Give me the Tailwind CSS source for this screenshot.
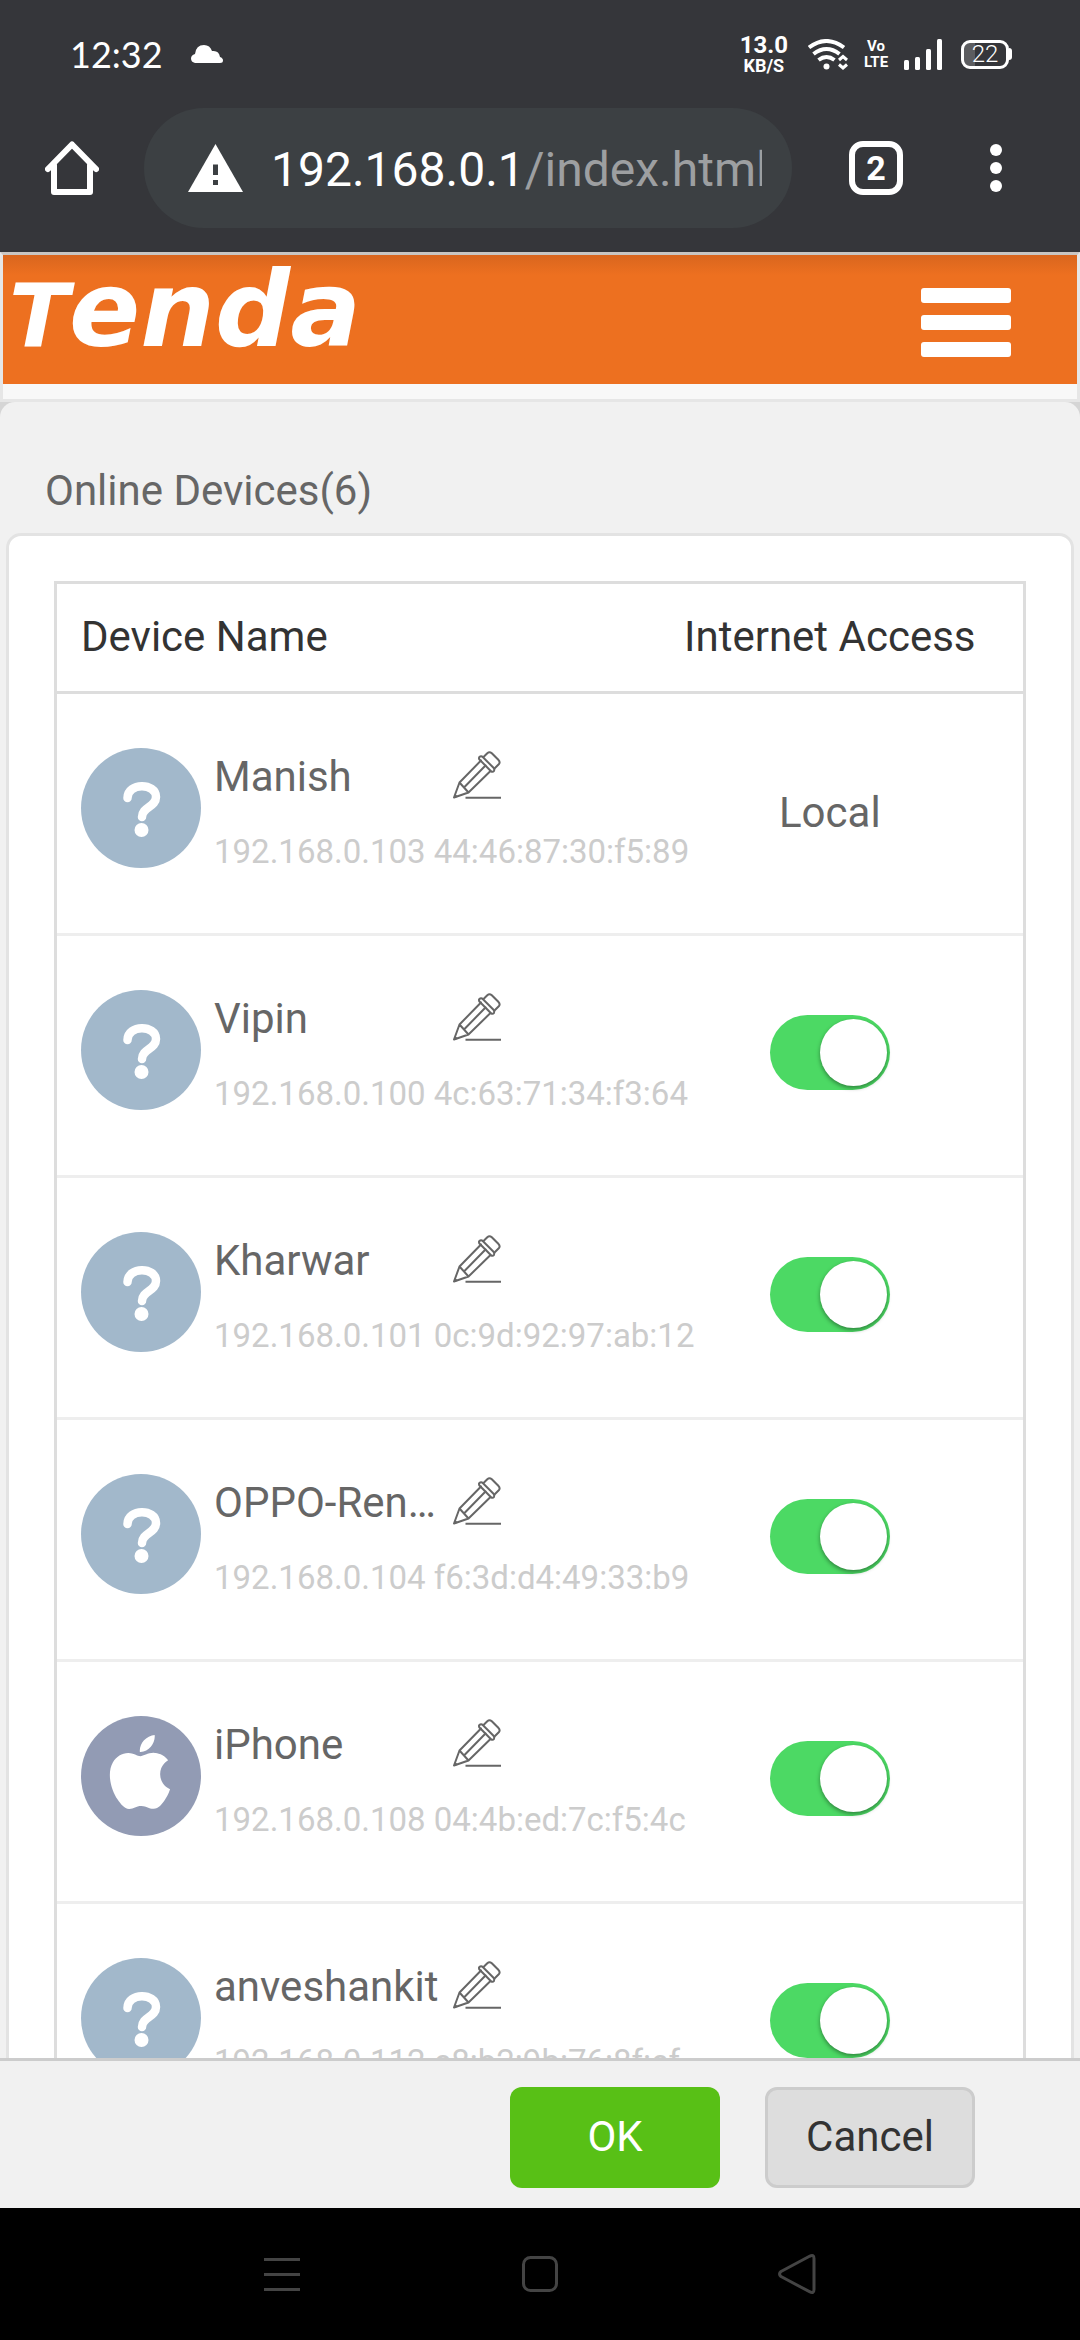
<!DOCTYPE html>
<html lang="en">
<head>
<meta charset="utf-8">
<meta name="viewport" content="width=device-width, initial-scale=1">
<title>Tenda - Online Devices</title>
<script src="https://cdn.jsdelivr.net/npm/@tailwindcss/browser@4"></script>
</head>
<body class="flex h-screen flex-col overflow-hidden bg-[#f1f1f1] font-[Roboto,sans-serif] text-[42px] leading-[60px] text-[#666]">

<svg class="hidden" aria-hidden="true">
  <symbol id="unknown" viewBox="0 0 120 120">
    <circle cx="60" cy="60" r="60" fill="#a2b8cb"/>
    <path d="M46.500 50C46.500 34.500 75 34.500 75 49C75 59 61 59 61 69" fill="none" stroke="#fff" stroke-width="8.500" stroke-linecap="round"/>
    <circle cx="60.500" cy="82" r="7" fill="#fff"/>
  </symbol>
  <symbol id="apple" viewBox="0 0 120 120">
    <circle cx="60" cy="60" r="60" fill="#929bb4"/>
    <path transform="translate(22 19) scale(3.08)" fill="#fff" d="M12.152 6.896c-.948 0-2.415-1.078-3.96-1.04-2.04.027-3.91 1.183-4.961 3.014-2.117 3.675-.546 9.103 1.519 12.09 1.013 1.454 2.208 3.09 3.792 3.039 1.52-.065 2.09-.987 3.935-.987 1.831 0 2.35.987 3.96.948 1.637-.026 2.676-1.48 3.676-2.948 1.156-1.688 1.636-3.325 1.662-3.415-.039-.013-3.182-1.221-3.22-4.857-.026-3.04 2.48-4.494 2.597-4.559-1.429-2.09-3.623-2.324-4.39-2.376-2-.156-3.675 1.09-4.61 1.09zM15.53 3.83c.843-1.012 1.4-2.427 1.245-3.83-1.207.052-2.662.805-3.532 1.818-.78.896-1.454 2.338-1.273 3.714 1.338.104 2.715-.688 3.559-1.701"/>
  </symbol>
  <symbol id="pencil" viewBox="0 0 48 48">
    <g fill="none" stroke="#666" stroke-width="2" stroke-linejoin="round" stroke-linecap="round">
      <path d="M28 9.500L6.500 31.500L1 46.500L15.500 41.500L37.500 20M6.500 31.500L15.500 41.500M11 36.500L32.500 14.500"/>
      <path d="M26.200 8.200Q25.500 6.200 27.200 5.500Q28.700 5 30 6.300L40.500 16.800Q41.800 18.200 41 19.800Q39.800 21.500 38 20.300Z"/>
      <path d="M30.500 6L34.300 2.200Q36.500 .200 38.800 2.300L45.300 8.800Q47.500 11 46 13L41.500 17.500"/>
    </g>
    <path d="M1 47l1-4 3.500 2.800z" fill="#666"/>
    <path d="M12.500 46.800H48" stroke="#666" stroke-width="2"/>
  </symbol>
</svg>

<header class="shrink-0 bg-[#35363a] text-white">
  <div class="flex h-[108px] items-center justify-between pl-[70px] pr-[68px]">
    <div class="flex items-center gap-7">
      <time class="font-[Lato,sans-serif] text-[36px] leading-[44px]">12:32</time>
      <svg class="h-[18px] w-8" viewBox="0 0 32 18" fill="#fff" aria-label="Weather"><path d="M4 18Q0 17 0 13.500Q0 10 4 9Q5 0 13 0Q19 0 21 6Q28 5 29 12Q32 13 32 15.500Q32 18 29 18Z"/></svg>
    </div>
    <div class="flex items-center">
      <div class="flex flex-col items-center font-bold">
        <span class="text-[24px] leading-[24px]">13.0</span>
        <span class="text-[18px] leading-[18px]">KB/S</span>
      </div>
      <svg class="ml-5 h-[31px] w-10" viewBox="0 0 40 31" fill="none" stroke="#fff" stroke-width="4" aria-label="Wi-Fi">
        <path d="M1 8.500Q18.500-4.500 36 8.500M5.500 15Q18.500 5 31.500 15M10.500 21Q18.500 15 26.500 21"/>
        <circle cx="18.500" cy="27.500" r="3" fill="#fff" stroke="none"/>
        <path d="M31 21l4-3.500 4 3.500M31 25.500l4 3.500 4-3.500" stroke-width="3"/>
      </svg>
      <div class="ml-4 flex w-6 flex-col items-center text-[15px] font-bold leading-4">
        <span>Vo</span><span>LTE</span>
      </div>
      <svg class="ml-4 h-[31px] w-[38px]" viewBox="0 0 38 31" fill="#fff" aria-label="Signal"><rect y="21" width="5" height="10" rx="1.500"/><rect x="11" y="18" width="5" height="13" rx="1.500"/><rect x="22" y="10" width="5" height="21" rx="1.500"/><rect x="33" width="5" height="31" rx="1.500"/></svg>
      <div class="ml-[19px] flex items-center" aria-label="Battery 22 percent">
        <div class="flex h-[29px] w-12 items-center justify-center rounded-[9px] border-3 border-white bg-linear-to-r from-[#5c5d60] from-25% to-transparent to-25% text-[24px] font-light leading-6">22</div>
        <span class="h-3 w-[3px] rounded-r-sm bg-white"></span>
      </div>
    </div>
  </div>
  <div class="flex h-36 items-start pl-[45px] pr-[78px]">
    <button class="mt-[33px]" aria-label="Home"><svg class="h-[54px] w-[54px]" viewBox="0 0 54 54" fill="none" stroke="#fff" stroke-width="6" stroke-linecap="round" stroke-linejoin="round"><path d="M3 28L27 3.500L51 28M9 24V51H45V24"/></svg></button>
    <div class="ml-[45px] flex h-[120px] min-w-0 flex-1 items-center rounded-full bg-[#3c4043] pl-11 pr-[30px]">
      <svg class="h-12 w-[55px] shrink-0" viewBox="0 0 55 48" aria-label="Not secure"><path d="M27.500 0L55 48H0Z" fill="#fff"/><path d="M25 20.500h5v10.500h-5zM25 36h5v5h-5z" fill="#3c4043"/></svg>
      <div class="ml-7 min-w-0 flex-1 overflow-hidden whitespace-nowrap pt-1 text-[48px] leading-[60px]">192.168.0.1<span class="text-[#9d9fa1]">/index.html</span></div>
    </div>
    <button class="ml-[57px] mt-[33px] flex h-[54px] w-[54px] items-center justify-center rounded-[14px] border-6 border-white text-[34px] font-bold leading-9" aria-label="Tabs">2</button>
    <button class="ml-[87px] mt-9 flex flex-col gap-[6px]" aria-label="More"><i class="h-3 w-3 rounded-full bg-white"></i><i class="h-3 w-3 rounded-full bg-white"></i><i class="h-3 w-3 rounded-full bg-white"></i></button>
  </div>
</header>

<div class="shrink-0 border-3 border-[#e6e6e6] border-t-[#c9c6c3] bg-[#f8f8f8] pb-[15px]">
  <nav class="flex h-[129px] items-start justify-between bg-[#ed7020] bg-linear-to-b from-[#d9661e] to-[#ed7020] to-[20px] pl-[6px] pr-[66px]">
    <a href="#" class="whitespace-nowrap font-['DejaVu_Sans',sans-serif] text-[105px] font-bold italic leading-[110px] text-white"><span class="text-[88px] leading-none">T</span>enda</a>
    <button class="mt-[33px] flex flex-col gap-3" aria-label="Menu"><i class="h-[15px] w-[90px] rounded-[3px] bg-white"></i><i class="h-[15px] w-[90px] rounded-[3px] bg-white"></i><i class="h-[15px] w-[90px] rounded-[3px] bg-white"></i></button>
  </nav>
</div>

<main class="min-h-0 flex-1 overflow-hidden bg-[#d5d5d5]">
  <div class="rounded-t-[15px] bg-[#f1f1f1] px-[6px] pt-[59px]">
    <h1 class="pl-[39px] pb-3">Online Devices(6)</h1>
    <section class="rounded-[15px] border-3 border-[#e3e3e3] bg-white px-[45px] py-[45px]">
      <table class="w-full table-fixed border-separate border-spacing-0 border-3 border-[#ddd]">
        <thead class="text-[#333]">
          <tr class="h-[110px]">
            <th scope="col" class="w-3/5 border-b-3 border-[#ddd] pb-[2px] pl-6 text-left font-normal">Device Name</th>
            <th scope="col" class="w-2/5 border-b-3 border-[#ddd] pb-[2px] text-center font-normal">Internet Access</th>
          </tr>
        </thead>
        <tbody>
          <tr class="h-[242px]">
            <td class="border-b-3 border-[#eee] pl-6 pt-[53px] align-top">
              <div class="flex gap-[13px]">
                <svg class="mt-px h-[120px] w-[120px] shrink-0"><use href="#unknown"/></svg>
                <div class="whitespace-nowrap">
                  <div class="flex items-start"><span class="w-[225px] truncate">Manish</span><button class="ml-[14px] mt-1" aria-label="Rename Manish"><svg class="h-12 w-12"><use href="#pencil"/></svg></button></div>
                  <p class="mt-[15px] w-0 text-[33px] text-[#ccc]">192.168.0.103 44:46:87:30:f5:89</p>
                </div>
              </div>
            </td>
            <td class="border-b-3 border-[#eee] pb-[2px] text-center">Local</td>
          </tr>
          <tr class="h-[242px]">
            <td class="border-b-3 border-[#eee] pl-6 pt-[53px] align-top">
              <div class="flex gap-[13px]">
                <svg class="mt-px h-[120px] w-[120px] shrink-0"><use href="#unknown"/></svg>
                <div class="whitespace-nowrap">
                  <div class="flex items-start"><span class="w-[225px] truncate">Vipin</span><button class="ml-[14px] mt-1" aria-label="Rename Vipin"><svg class="h-12 w-12"><use href="#pencil"/></svg></button></div>
                  <p class="mt-[15px] w-0 text-[33px] text-[#ccc]">192.168.0.100 4c:63:71:34:f3:64</p>
                </div>
              </div>
            </td>
            <td class="border-b-3 border-[#eee] pt-[79px] align-top"><input type="checkbox" role="switch" checked aria-label="Internet access for Vipin" class="mx-auto flex h-[75px] w-[120px] appearance-none items-center justify-end rounded-full bg-[#4cd964] pr-[3px] before:h-[67px] before:w-[67px] before:rounded-full before:bg-white before:shadow-[0_2px_4px_#0006] before:content-['']"></td>
          </tr>
          <tr class="h-[242px]">
            <td class="border-b-3 border-[#eee] pl-6 pt-[53px] align-top">
              <div class="flex gap-[13px]">
                <svg class="mt-px h-[120px] w-[120px] shrink-0"><use href="#unknown"/></svg>
                <div class="whitespace-nowrap">
                  <div class="flex items-start"><span class="w-[225px] truncate">Kharwar</span><button class="ml-[14px] mt-1" aria-label="Rename Kharwar"><svg class="h-12 w-12"><use href="#pencil"/></svg></button></div>
                  <p class="mt-[15px] w-0 text-[33px] text-[#ccc]">192.168.0.101 0c:9d:92:97:ab:12</p>
                </div>
              </div>
            </td>
            <td class="border-b-3 border-[#eee] pt-[79px] align-top"><input type="checkbox" role="switch" checked aria-label="Internet access for Kharwar" class="mx-auto flex h-[75px] w-[120px] appearance-none items-center justify-end rounded-full bg-[#4cd964] pr-[3px] before:h-[67px] before:w-[67px] before:rounded-full before:bg-white before:shadow-[0_2px_4px_#0006] before:content-['']"></td>
          </tr>
          <tr class="h-[242px]">
            <td class="border-b-3 border-[#eee] pl-6 pt-[53px] align-top">
              <div class="flex gap-[13px]">
                <svg class="mt-px h-[120px] w-[120px] shrink-0"><use href="#unknown"/></svg>
                <div class="whitespace-nowrap">
                  <div class="flex items-start"><span class="w-[225px] truncate">OPPO-Ren…</span><button class="ml-[14px] mt-1" aria-label="Rename OPPO-Ren…"><svg class="h-12 w-12"><use href="#pencil"/></svg></button></div>
                  <p class="mt-[15px] w-0 text-[33px] text-[#ccc]">192.168.0.104 f6:3d:d4:49:33:b9</p>
                </div>
              </div>
            </td>
            <td class="border-b-3 border-[#eee] pt-[79px] align-top"><input type="checkbox" role="switch" checked aria-label="Internet access for OPPO-Ren…" class="mx-auto flex h-[75px] w-[120px] appearance-none items-center justify-end rounded-full bg-[#4cd964] pr-[3px] before:h-[67px] before:w-[67px] before:rounded-full before:bg-white before:shadow-[0_2px_4px_#0006] before:content-['']"></td>
          </tr>
          <tr class="h-[242px]">
            <td class="border-b-3 border-[#eee] pl-6 pt-[53px] align-top">
              <div class="flex gap-[13px]">
                <svg class="mt-px h-[120px] w-[120px] shrink-0"><use href="#apple"/></svg>
                <div class="whitespace-nowrap">
                  <div class="flex items-start"><span class="w-[225px] truncate">iPhone</span><button class="ml-[14px] mt-1" aria-label="Rename iPhone"><svg class="h-12 w-12"><use href="#pencil"/></svg></button></div>
                  <p class="mt-[15px] w-0 text-[33px] text-[#ccc]">192.168.0.108 04:4b:ed:7c:f5:4c</p>
                </div>
              </div>
            </td>
            <td class="border-b-3 border-[#eee] pt-[79px] align-top"><input type="checkbox" role="switch" checked aria-label="Internet access for iPhone" class="mx-auto flex h-[75px] w-[120px] appearance-none items-center justify-end rounded-full bg-[#4cd964] pr-[3px] before:h-[67px] before:w-[67px] before:rounded-full before:bg-white before:shadow-[0_2px_4px_#0006] before:content-['']"></td>
          </tr>
          <tr class="h-[242px]">
            <td class="pl-6 pt-[53px] align-top">
              <div class="flex gap-[13px]">
                <svg class="mt-px h-[120px] w-[120px] shrink-0"><use href="#unknown"/></svg>
                <div class="whitespace-nowrap">
                  <div class="flex items-start"><span class="w-[225px] truncate">anveshankit</span><button class="ml-[14px] mt-1" aria-label="Rename anveshankit"><svg class="h-12 w-12"><use href="#pencil"/></svg></button></div>
                  <p class="mt-[15px] w-0 text-[33px] text-[#ccc]">192.168.0.112 e8:b2:9b:76:8f:ef</p>
                </div>
              </div>
            </td>
            <td class="pt-[79px] align-top"><input type="checkbox" role="switch" checked aria-label="Internet access for anveshankit" class="mx-auto flex h-[75px] w-[120px] appearance-none items-center justify-end rounded-full bg-[#4cd964] pr-[3px] before:h-[67px] before:w-[67px] before:rounded-full before:bg-white before:shadow-[0_2px_4px_#0006] before:content-['']"></td>
          </tr>
        </tbody>
      </table>
    </section>
  </div>
</main>

<footer class="shrink-0">
  <div class="flex justify-end gap-[45px] border-t-3 border-[#ccc] bg-[#f1f1f1] pb-5 pl-[105px] pr-[105px] pt-[26px]">
    <button class="h-[101px] w-[210px] rounded-xl bg-[#58c016] pb-[2px] text-white">OK</button>
    <button class="h-[101px] w-[210px] rounded-xl border-3 border-[#ccc] bg-[#ddd] pb-[2px] text-[#333]">Cancel</button>
  </div>
  <nav class="flex h-[132px] items-center justify-center gap-[218px] bg-black">
    <button aria-label="Recents"><svg class="h-10 w-10" viewBox="0 0 40 40" stroke="#444" stroke-width="3"><path d="M2 5.500H38M2 20.500H38M2 35.500H38"/></svg></button>
    <button aria-label="Home screen"><svg class="h-10 w-10" viewBox="0 0 40 40" fill="none" stroke="#444" stroke-width="3"><rect x="3.500" y="3.500" width="33" height="33" rx="7"/></svg></button>
    <button aria-label="Back"><svg class="h-10 w-10" viewBox="0 0 40 40" fill="none" stroke="#444" stroke-width="3" stroke-linejoin="round"><path d="M31.500 2.300Q36 0 36 4.500V35.500Q36 40 31.500 37.700L3 22.500Q0 20 3 17.500Z"/></svg></button>
  </nav>
</footer>
</body>
</html>
